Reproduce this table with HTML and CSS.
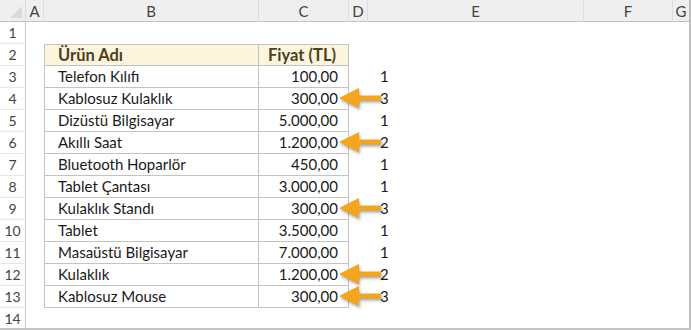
FILE: index.html
```html
<!DOCTYPE html>
<html>
<head>
<meta charset="utf-8">
<link rel="stylesheet" href="styles.css">
</head>
<body>
<div class="sheet">
  <div class="row colhead">
    <div class="rh corner"><span class="tri"></span></div>
    <div class="c ca">A</div><div class="c cb">B</div><div class="c cc">C</div><div class="c cd">D</div>
    <div class="c ce">E</div><div class="c cf">F</div><div class="c cg">G</div>
  </div>
  <div class="row"><div class="rh">1</div></div>
  <div class="row"><div class="rh">2</div><div class="c ca"></div><div class="c cb t th tt">Ürün Adı</div><div class="c cc t th tt num">Fiyat (TL)</div></div>
  <div class="row"><div class="rh">3</div><div class="c ca"></div><div class="c cb t">Telefon Kılıfı</div><div class="c cc t num">100,00</div><div class="c cd"></div><div class="c ce rank">1</div></div>
  <div class="row"><div class="rh">4</div><div class="c ca"></div><div class="c cb t">Kablosuz Kulaklık</div><div class="c cc t num">300,00</div><div class="c cd"></div><div class="c ce rank"><svg class="arrow" width="48" height="26" viewBox="0 0 48 26"><path d="M2 12 L22 2 L22 9.5 L44 9.5 L44 14.5 L22 14.5 L22 22 Z"/></svg>3</div></div>
  <div class="row"><div class="rh">5</div><div class="c ca"></div><div class="c cb t">Dizüstü Bilgisayar</div><div class="c cc t num">5.000,00</div><div class="c cd"></div><div class="c ce rank">1</div></div>
  <div class="row"><div class="rh">6</div><div class="c ca"></div><div class="c cb t">Akıllı Saat</div><div class="c cc t num">1.200,00</div><div class="c cd"></div><div class="c ce rank"><svg class="arrow" width="48" height="26" viewBox="0 0 48 26"><path d="M2 12 L22 2 L22 9.5 L44 9.5 L44 14.5 L22 14.5 L22 22 Z"/></svg>2</div></div>
  <div class="row"><div class="rh">7</div><div class="c ca"></div><div class="c cb t">Bluetooth Hoparlör</div><div class="c cc t num">450,00</div><div class="c cd"></div><div class="c ce rank">1</div></div>
  <div class="row"><div class="rh">8</div><div class="c ca"></div><div class="c cb t">Tablet Çantası</div><div class="c cc t num">3.000,00</div><div class="c cd"></div><div class="c ce rank">1</div></div>
  <div class="row"><div class="rh">9</div><div class="c ca"></div><div class="c cb t">Kulaklık Standı</div><div class="c cc t num">300,00</div><div class="c cd"></div><div class="c ce rank"><svg class="arrow" width="48" height="26" viewBox="0 0 48 26"><path d="M2 12 L22 2 L22 9.5 L44 9.5 L44 14.5 L22 14.5 L22 22 Z"/></svg>3</div></div>
  <div class="row"><div class="rh">10</div><div class="c ca"></div><div class="c cb t">Tablet</div><div class="c cc t num">3.500,00</div><div class="c cd"></div><div class="c ce rank">1</div></div>
  <div class="row"><div class="rh">11</div><div class="c ca"></div><div class="c cb t">Masaüstü Bilgisayar</div><div class="c cc t num">7.000,00</div><div class="c cd"></div><div class="c ce rank">1</div></div>
  <div class="row"><div class="rh">12</div><div class="c ca"></div><div class="c cb t">Kulaklık</div><div class="c cc t num">1.200,00</div><div class="c cd"></div><div class="c ce rank"><svg class="arrow" width="48" height="26" viewBox="0 0 48 26"><path d="M2 12 L22 2 L22 9.5 L44 9.5 L44 14.5 L22 14.5 L22 22 Z"/></svg>2</div></div>
  <div class="row"><div class="rh">13</div><div class="c ca"></div><div class="c cb t">Kablosuz Mouse</div><div class="c cc t num">300,00</div><div class="c cd"></div><div class="c ce rank"><svg class="arrow" width="48" height="26" viewBox="0 0 48 26"><path d="M2 12 L22 2 L22 9.5 L44 9.5 L44 14.5 L22 14.5 L22 22 Z"/></svg>3</div></div>
  <div class="row last"><div class="rh">14</div></div>
</div>
</body>
</html>
```
FILE: styles.css
```css
html, body {
  margin: 0;
  padding: 0;
  background: #ffffff;
}
.sheet {
  width: 691px;
  height: 330px;
  box-sizing: border-box;
  border-right: 2px solid #bdbdbd;
  border-bottom: 2px solid #c4c4c4;
  overflow: hidden;
  font-family: Lato, "Open Sans", sans-serif;
  font-size: 15px;
  color: #1a1a1a;
}
.row {
  display: flex;
  height: 22px;
}
.colhead {
  background: #efefef;
  border-bottom: 1px solid #c2c2c2;
  height: 22px;
  box-sizing: border-box;
}
.rh {
  flex: 0 0 26px;
  box-sizing: border-box;
  border-right: 1px solid #c8c8c8;
  border-bottom: 1px solid #e6e6e6;
  text-align: center;
  line-height: 22px;
  font-size: 14px;
  color: #444;
}
.colhead .rh {
  border-bottom: none;
  position: relative;
  border-right: 1px solid #dcdcdc;
}
.tri {
  position: absolute;
  right: 3px;
  bottom: 3px;
  width: 0;
  height: 0;
  border-left: 12px solid transparent;
  border-bottom: 12px solid #dadada;
}
.c {
  box-sizing: border-box;
  height: 22px;
  line-height: 21px;
}
.colhead .c {
  text-align: center;
  font-size: 15px;
  color: #444;
  border-right: 1px solid #dcdcdc;
  line-height: 22px;
}
.ca { flex: 0 0 18px; }
.cb { flex: 0 0 215px; }
.cc { flex: 0 0 90px; }
.cd { flex: 0 0 19px; }
.ce { flex: 0 0 216px; }
.cf { flex: 0 0 89px; }
.cg { flex: 1 1 auto; border-right: none !important; }
.t {
  border-bottom: 1px solid #c3c3c3;
  border-right: 1px solid #c3c3c3;
  padding: 0 6px 0 13px;
  white-space: nowrap;
}
.cb.t {
  border-left: 1px solid #c3c3c3;
}
.tt {
  border-top: 1px solid #c3c3c3;
  line-height: 20px;
}
.th {
  background: #fcf5de;
  font-weight: bold;
  font-size: 16.5px;
  color: #4f3f1c;
}
.num {
  text-align: right;
  padding: 0 10px 0 0;
}
.th.num {
  padding-right: 12px;
}
.rank {
  position: relative;
  padding-left: 12px;
  line-height: 21px;
}
.arrow {
  position: absolute;
  left: -31px;
  top: -2px;
  fill: #f4a51c;
  filter: drop-shadow(1px 2px 1.5px rgba(0,0,0,0.35));
}
```
